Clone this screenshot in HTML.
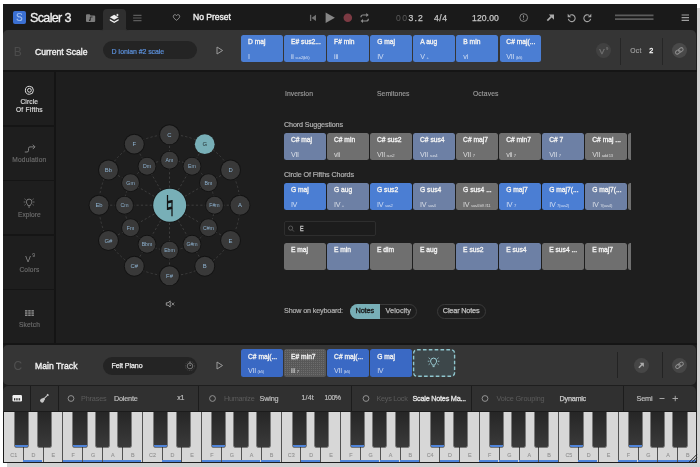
<!DOCTYPE html>
<html><head><meta charset="utf-8"><title>Scaler 3</title>
<style>
html,body{margin:0;padding:0;background:#fff;}
body{width:700px;height:467px;position:relative;overflow:hidden;font-family:"Liberation Sans",sans-serif;}
.r{position:absolute;}
.t{position:absolute;white-space:nowrap;}
#app{position:absolute;left:0;top:0;width:700px;height:467px;will-change:transform;}
svg text{font-family:"Liberation Sans",sans-serif;}
</style></head><body><div id="app">
<div class="r" style="left:7px;top:8px;width:693px;height:459px;background:#d2d2d2;"></div>
<div class="r" style="left:3px;top:4px;width:694px;height:459px;background:#1e1e1e;"></div>
<div class="r" style="left:3px;top:4px;width:694px;height:26.4px;background:#1a1a1a;"></div>
<div class="r" style="left:103.2px;top:8.6px;width:22.7px;height:22px;background:#2f2f2f;border-radius:4px 4px 0 0;"></div>
<div class="r" style="left:3.4px;top:30.4px;width:692.7px;height:40.1px;background:#353535;border-radius:5px 5px 0 0;"></div>
<div class="r" style="left:12.7px;top:11.2px;width:13px;height:13px;background:#3b70d3;border-radius:2px;"></div>
<div class="t" style="left:15.9px;top:12.1px;font-size:10px;line-height:12px;color:#a3c0f0;-webkit-text-stroke:0.1px #a3c0f0;">S</div>
<div class="t" style="left:30px;top:11.14px;font-size:12.6px;line-height:15.12px;color:#f0f0f0;-webkit-text-stroke:0.3px #f0f0f0;letter-spacing:-0.678px;">Scaler 3</div>
<div class="t" style="left:193px;top:12.24px;font-size:8.6px;line-height:10.32px;color:#f2f2f2;-webkit-text-stroke:0.35px #f2f2f2;letter-spacing:-0.026px;">No Preset</div>
<div class="t" style="left:396px;top:13.04px;font-size:8.6px;line-height:10.32px;color:#5a5a5a;letter-spacing:1.468px;">00</div>
<div class="t" style="left:408.5px;top:13.04px;font-size:8.6px;line-height:10.32px;color:#c6c6c6;-webkit-text-stroke:0.25px #c6c6c6;letter-spacing:1.182px;">3.2</div>
<div class="t" style="left:434px;top:13.04px;font-size:8.6px;line-height:10.32px;color:#c6c6c6;-webkit-text-stroke:0.25px #c6c6c6;letter-spacing:0.515px;">4/4</div>
<div class="t" style="left:472px;top:13.04px;font-size:8.6px;line-height:10.32px;color:#c6c6c6;-webkit-text-stroke:0.25px #c6c6c6;letter-spacing:0.116px;">120.00</div>
<svg class="r" style="left:0;top:0" width="700" height="60" viewBox="0 0 700 60">
<!-- tab feet -->
<path d="M100 30.5h3.3v-3.3a3.3 3.3 0 0 1-3.3 3.3zM129.2 30.5h-3.3v-3.3a3.3 3.3 0 0 0 3.3 3.3z" fill="#2f2f2f"/>
<!-- folder -->
<path d="M86 15.2a1 1 0 0 1 1-1h2.6l1 1.3h3.6a1 1 0 0 1 1 1v4.6a1 1 0 0 1-1 1h-7.2a1 1 0 0 1-1-1z" fill="#7c7c7c"/>
<path d="M90.3 20.2v-3.2h2.2" fill="none" stroke="#1a1a1a" stroke-width="0.8"/><circle cx="89.7" cy="20.2" r="0.8" fill="#1a1a1a"/>
<!-- layers (active) -->
<path d="M109.8 17.3l4.4-2.5 4.4 2.5-4.4 2.5z" fill="#f0f0f0"/>
<path d="M109.8 19.1l4.4 2.5 4.4-2.5v1.4l-4.4 2.5-4.4-2.5z" fill="#f0f0f0"/>
<circle cx="117.4" cy="15" r="1.3" fill="#f0f0f0" stroke="#2f2f2f" stroke-width="0.5"/>
<!-- list -->
<path d="M133.3 15.3h8.2M133 18h8.5M133.3 20.7h8.2" stroke="#5c5c5c" stroke-width="1.2"/>
<!-- heart -->
<path d="M176.5 20.3c-2-1.5-3.2-2.6-3.2-3.9a1.7 1.7 0 0 1 3.2-.8 1.7 1.7 0 0 1 3.2.8c0 1.3-1.2 2.4-3.2 3.9z" fill="none" stroke="#9a9a9a" stroke-width="0.9"/>
<!-- prev -->
<path d="M310.6 14.8v6.2" stroke="#727272" stroke-width="1.3"/>
<path d="M316 14.8v6.2l-4.5-3.1z" fill="#727272"/>
<!-- play -->
<path d="M325.6 12.4v10.6l9.3-5.3z" fill="#868686"/>
<!-- record -->
<circle cx="347.8" cy="17.7" r="4.3" fill="#7c3a43"/>
<!-- loop -->
<path d="M361 17.3v-.3a2 2 0 0 1 2-2h4.3M368.3 18.7v.3a2 2 0 0 1-2 2h-4.3" fill="none" stroke="#8c8c8c" stroke-width="1.2"/>
<path d="M366.3 13l2.4 2-2.4 2zM363 19l-2.4 2 2.4 2z" fill="#8c8c8c"/>
<!-- clock -->
<circle cx="523.7" cy="17.6" r="3.9" fill="none" stroke="#8c8c8c" stroke-width="0.9"/>
<path d="M523.5 15.3v2.4M523.5 18.7v1" stroke="#8c8c8c" stroke-width="1"/>
<!-- arrow NE -->
<path d="M547.3 20.6l4.2-4.2" stroke="#aaaaaa" stroke-width="1.7"/>
<path d="M548.8 14.6h5.2v5.2z" fill="#aaaaaa"/>
<!-- undo -->
<path d="M569.8 15.4a3.4 3.4 0 1 1-1.4 3.4" fill="none" stroke="#a4a4a4" stroke-width="1.1"/>
<path d="M567.7 13.8v3.5h3.5z" fill="#a4a4a4"/>
<!-- redo -->
<path d="M589.2 15.4a3.4 3.4 0 1 0 1.4 3.4" fill="none" stroke="#a4a4a4" stroke-width="1.1"/>
<path d="M591.3 13.8v3.5h-3.5z" fill="#a4a4a4"/>
<!-- double line -->
<path d="M615 15.4h38.5M615 19.1h38.5" stroke="#5c5c5c" stroke-width="1.6"/>
<!-- hamburger -->
<path d="M681.6 15h7.4M681.6 17.7h7.4M681.6 20.4h7.4" stroke="#a0a0a0" stroke-width="1.2"/>
<!-- scale row play -->
<path d="M217 47v7l5.6-3.5z" fill="none" stroke="#9a9a9a" stroke-width="1" stroke-linejoin="round"/>
</svg>
<div class="t" style="left:13.8px;top:44.5px;font-size:12px;line-height:14.4px;color:#4c4c4c;">B</div>
<div class="t" style="left:35px;top:46.64px;font-size:8.6px;line-height:10.32px;color:#f2f2f2;-webkit-text-stroke:0.35px #f2f2f2;letter-spacing:0.002px;">Current Scale</div>
<div class="r" style="left:103px;top:41px;width:94px;height:18px;background:#242424;border-radius:9px;"></div>
<div class="t" style="left:111.5px;top:47.8px;font-size:7px;line-height:8.4px;color:#5b8fd9;-webkit-text-stroke:0.2px #5b8fd9;letter-spacing:-0.093px;">D Ionian #2 scale</div>
<div class="r" style="left:241.2px;top:35.2px;width:41.6px;height:27.2px;background:#4b7ed3;border-radius:2.5px;"></div>
<div class="t" style="left:248px;top:38.18px;font-size:6.7px;line-height:8.04px;color:#f2f2f2;-webkit-text-stroke:0.33px #f2f2f2;">D maj</div>
<div class="t" style="left:248px;top:52.98px;font-size:7.2px;line-height:8.64px;color:rgba(255,255,255,.72);letter-spacing:-0.3px;">I</div>
<div class="r" style="left:284.25px;top:35.2px;width:41.6px;height:27.2px;background:#4b7ed3;border-radius:2.5px;"></div>
<div class="t" style="left:291.05px;top:38.18px;font-size:6.7px;line-height:8.04px;color:#f2f2f2;-webkit-text-stroke:0.33px #f2f2f2;">E# sus2...</div>
<div class="t" style="left:291.05px;top:52.98px;font-size:7.2px;line-height:8.64px;color:rgba(255,255,255,.72);letter-spacing:-0.3px;">ii <span style="font-size:4.2px">sus2(b5)</span></div>
<div class="r" style="left:327.3px;top:35.2px;width:41.6px;height:27.2px;background:#4b7ed3;border-radius:2.5px;"></div>
<div class="t" style="left:334.1px;top:38.18px;font-size:6.7px;line-height:8.04px;color:#f2f2f2;-webkit-text-stroke:0.33px #f2f2f2;">F# min</div>
<div class="t" style="left:334.1px;top:52.98px;font-size:7.2px;line-height:8.64px;color:rgba(255,255,255,.72);letter-spacing:-0.3px;">iii</div>
<div class="r" style="left:370.35px;top:35.2px;width:41.6px;height:27.2px;background:#4b7ed3;border-radius:2.5px;"></div>
<div class="t" style="left:377.15px;top:38.18px;font-size:6.7px;line-height:8.04px;color:#f2f2f2;-webkit-text-stroke:0.33px #f2f2f2;">G maj</div>
<div class="t" style="left:377.15px;top:52.98px;font-size:7.2px;line-height:8.64px;color:rgba(255,255,255,.72);letter-spacing:-0.3px;">IV</div>
<div class="r" style="left:413.4px;top:35.2px;width:41.6px;height:27.2px;background:#4b7ed3;border-radius:2.5px;"></div>
<div class="t" style="left:420.2px;top:38.18px;font-size:6.7px;line-height:8.04px;color:#f2f2f2;-webkit-text-stroke:0.33px #f2f2f2;">A aug</div>
<div class="t" style="left:420.2px;top:52.98px;font-size:7.2px;line-height:8.64px;color:rgba(255,255,255,.72);letter-spacing:-0.3px;">V <span style="font-size:4.2px">+</span></div>
<div class="r" style="left:456.45px;top:35.2px;width:41.6px;height:27.2px;background:#4b7ed3;border-radius:2.5px;"></div>
<div class="t" style="left:463.25px;top:38.18px;font-size:6.7px;line-height:8.04px;color:#f2f2f2;-webkit-text-stroke:0.33px #f2f2f2;">B min</div>
<div class="t" style="left:463.25px;top:52.98px;font-size:7.2px;line-height:8.64px;color:rgba(255,255,255,.72);letter-spacing:-0.3px;">vi</div>
<div class="r" style="left:499.5px;top:35.2px;width:41.6px;height:27.2px;background:#4b7ed3;border-radius:2.5px;"></div>
<div class="t" style="left:506.3px;top:38.18px;font-size:6.7px;line-height:8.04px;color:#f2f2f2;-webkit-text-stroke:0.33px #f2f2f2;">C# maj(...</div>
<div class="t" style="left:506.3px;top:52.98px;font-size:7.2px;line-height:8.64px;color:rgba(255,255,255,.72);letter-spacing:-0.3px;">VII <span style="font-size:4.2px">(b5)</span></div>
<div class="r" style="left:619.5px;top:38px;width:1px;height:27px;background:#262626;"></div>
<div class="r" style="left:662px;top:38px;width:1px;height:27px;background:#262626;"></div>
<div class="r" style="left:595.8px;top:42.9px;width:15.2px;height:15.2px;background:#414141;border-radius:50%;"></div>
<div class="t" style="left:599.2px;top:46.7px;font-size:8px;line-height:9.6px;color:#747474;-webkit-text-stroke:0.25px #747474;">V</div>
<div class="t" style="left:606px;top:45.98px;font-size:4.2px;line-height:5.04px;color:#747474;-webkit-text-stroke:0.1px #747474;">9</div>
<div class="t" style="left:630.3px;top:47.22px;font-size:6.8px;line-height:8.16px;color:#a0a0a0;-webkit-text-stroke:0.15px #a0a0a0;letter-spacing:0.207px;">Oct</div>
<div class="t" style="left:649.3px;top:46.98px;font-size:7.2px;line-height:8.64px;color:#f2f2f2;-webkit-text-stroke:0.35px #f2f2f2;">2</div>
<div class="r" style="left:672px;top:43.4px;width:14.8px;height:14.8px;background:#494949;border-radius:50%;"></div>
<div class="r" style="left:54.2px;top:71px;width:1.8px;height:274px;background:#141414;"></div>
<div class="r" style="left:3px;top:70.3px;width:694px;height:1.5px;background:#151515;"></div>
<div class="r" style="left:3px;top:125px;width:52px;height:1.5px;background:#151515;"></div>
<div class="r" style="left:3px;top:179.6px;width:52px;height:1.5px;background:#151515;"></div>
<div class="r" style="left:3px;top:234.2px;width:52px;height:1.5px;background:#151515;"></div>
<div class="r" style="left:3px;top:288.8px;width:52px;height:1.5px;background:#151515;"></div>
<div class="r" style="left:3px;top:343.4px;width:694px;height:1.5px;background:#151515;"></div>
<div class="t" style="left:20.5px;top:97.74px;font-size:6.6px;line-height:7.92px;color:#d8d8d8;-webkit-text-stroke:0.2px #d8d8d8;letter-spacing:0.105px;">Circle</div>
<div class="t" style="left:16px;top:105.74px;font-size:6.6px;line-height:7.92px;color:#d8d8d8;-webkit-text-stroke:0.2px #d8d8d8;letter-spacing:0.218px;">Of Fifths</div>
<div class="t" style="left:12.3px;top:156.34px;font-size:6.6px;line-height:7.92px;color:#6c6c6c;-webkit-text-stroke:0.15px #6c6c6c;letter-spacing:0.191px;">Modulation</div>
<div class="t" style="left:18px;top:211.14px;font-size:6.6px;line-height:7.92px;color:#6c6c6c;-webkit-text-stroke:0.15px #6c6c6c;letter-spacing:0.032px;">Explore</div>
<div class="t" style="left:19.4px;top:265.84px;font-size:6.6px;line-height:7.92px;color:#6c6c6c;-webkit-text-stroke:0.15px #6c6c6c;letter-spacing:0.172px;">Colors</div>
<div class="t" style="left:18.9px;top:320.54px;font-size:6.6px;line-height:7.92px;color:#6c6c6c;-webkit-text-stroke:0.15px #6c6c6c;letter-spacing:0.171px;">Sketch</div>
<div class="t" style="left:25.2px;top:254.06px;font-size:8.4px;line-height:10.08px;color:#8a8a8a;">V</div>
<div class="t" style="left:32.2px;top:251.98px;font-size:5.2px;line-height:6.24px;color:#8a8a8a;">9</div>
<div class="t" style="left:285px;top:89.82px;font-size:6.8px;line-height:8.16px;color:#9a9a9a;-webkit-text-stroke:0.15px #9a9a9a;letter-spacing:0.046px;">Inversion</div>
<div class="t" style="left:377px;top:89.82px;font-size:6.8px;line-height:8.16px;color:#9a9a9a;-webkit-text-stroke:0.15px #9a9a9a;letter-spacing:0.042px;">Semitones</div>
<div class="t" style="left:473px;top:89.82px;font-size:6.8px;line-height:8.16px;color:#9a9a9a;-webkit-text-stroke:0.15px #9a9a9a;letter-spacing:0.08px;">Octaves</div>
<div class="t" style="left:284px;top:120.68px;font-size:7.2px;line-height:8.64px;color:#b0b0b0;-webkit-text-stroke:0.2px #b0b0b0;letter-spacing:-0.131px;">Chord Suggestions</div>
<div class="t" style="left:284px;top:170.78px;font-size:7.2px;line-height:8.64px;color:#b0b0b0;-webkit-text-stroke:0.2px #b0b0b0;letter-spacing:-0.122px;">Circle Of Fifths Chords</div>
<div class="r" style="left:283.6px;top:130px;width:347.5px;height:145px;overflow:hidden">
<div class="r" style="left:0.5px;top:3.2px;width:41.6px;height:27.2px;background:#6d80a5;border-radius:2.5px;"></div>
<div class="t" style="left:7.3px;top:6.18px;font-size:6.7px;line-height:8.04px;color:#f2f2f2;-webkit-text-stroke:0.33px #f2f2f2;">C# maj</div>
<div class="t" style="left:7.3px;top:20.98px;font-size:7.2px;line-height:8.64px;color:rgba(255,255,255,.72);letter-spacing:-0.3px;">VII</div>
<div class="r" style="left:43.55px;top:3.2px;width:41.6px;height:27.2px;background:#6f6f6f;border-radius:2.5px;"></div>
<div class="t" style="left:50.35px;top:6.18px;font-size:6.7px;line-height:8.04px;color:#f2f2f2;-webkit-text-stroke:0.33px #f2f2f2;">C# min</div>
<div class="t" style="left:50.35px;top:20.98px;font-size:7.2px;line-height:8.64px;color:rgba(255,255,255,.72);letter-spacing:-0.3px;">vii</div>
<div class="r" style="left:86.6px;top:3.2px;width:41.6px;height:27.2px;background:#6f6f6f;border-radius:2.5px;"></div>
<div class="t" style="left:93.4px;top:6.18px;font-size:6.7px;line-height:8.04px;color:#f2f2f2;-webkit-text-stroke:0.33px #f2f2f2;">C# sus2</div>
<div class="t" style="left:93.4px;top:20.98px;font-size:7.2px;line-height:8.64px;color:rgba(255,255,255,.72);letter-spacing:-0.3px;">VII <span style="font-size:4.2px">sus2</span></div>
<div class="r" style="left:129.65px;top:3.2px;width:41.6px;height:27.2px;background:#6d80a5;border-radius:2.5px;"></div>
<div class="t" style="left:136.45px;top:6.18px;font-size:6.7px;line-height:8.04px;color:#f2f2f2;-webkit-text-stroke:0.33px #f2f2f2;">C# sus4</div>
<div class="t" style="left:136.45px;top:20.98px;font-size:7.2px;line-height:8.64px;color:rgba(255,255,255,.72);letter-spacing:-0.3px;">VII <span style="font-size:4.2px">sus4</span></div>
<div class="r" style="left:172.7px;top:3.2px;width:41.6px;height:27.2px;background:#6f6f6f;border-radius:2.5px;"></div>
<div class="t" style="left:179.5px;top:6.18px;font-size:6.7px;line-height:8.04px;color:#f2f2f2;-webkit-text-stroke:0.33px #f2f2f2;">C# maj7</div>
<div class="t" style="left:179.5px;top:20.98px;font-size:7.2px;line-height:8.64px;color:rgba(255,255,255,.72);letter-spacing:-0.3px;">VII <span style="font-size:4.2px">7</span></div>
<div class="r" style="left:215.75px;top:3.2px;width:41.6px;height:27.2px;background:#6f6f6f;border-radius:2.5px;"></div>
<div class="t" style="left:222.55px;top:6.18px;font-size:6.7px;line-height:8.04px;color:#f2f2f2;-webkit-text-stroke:0.33px #f2f2f2;">C# min7</div>
<div class="t" style="left:222.55px;top:20.98px;font-size:7.2px;line-height:8.64px;color:rgba(255,255,255,.72);letter-spacing:-0.3px;">vii <span style="font-size:4.2px">7</span></div>
<div class="r" style="left:258.8px;top:3.2px;width:41.6px;height:27.2px;background:#6d80a5;border-radius:2.5px;"></div>
<div class="t" style="left:265.6px;top:6.18px;font-size:6.7px;line-height:8.04px;color:#f2f2f2;-webkit-text-stroke:0.33px #f2f2f2;">C# 7</div>
<div class="t" style="left:265.6px;top:20.98px;font-size:7.2px;line-height:8.64px;color:rgba(255,255,255,.72);letter-spacing:-0.3px;">VII <span style="font-size:4.2px">7</span></div>
<div class="r" style="left:301.85px;top:3.2px;width:41.6px;height:27.2px;background:#6f6f6f;border-radius:2.5px;"></div>
<div class="t" style="left:308.65px;top:6.18px;font-size:6.7px;line-height:8.04px;color:#f2f2f2;-webkit-text-stroke:0.33px #f2f2f2;">C# maj ...</div>
<div class="t" style="left:308.65px;top:20.98px;font-size:7.2px;line-height:8.64px;color:rgba(255,255,255,.72);letter-spacing:-0.3px;">VII <span style="font-size:4.2px">add 13</span></div>
<div class="r" style="left:344.9px;top:3.2px;width:41.6px;height:27.2px;background:#6f6f6f;border-radius:2.5px;"></div>
<div class="r" style="left:0.5px;top:53px;width:41.6px;height:27.2px;background:#4b7ed3;border-radius:2.5px;"></div>
<div class="t" style="left:7.3px;top:55.98px;font-size:6.7px;line-height:8.04px;color:#f2f2f2;-webkit-text-stroke:0.33px #f2f2f2;">G maj</div>
<div class="t" style="left:7.3px;top:70.78px;font-size:7.2px;line-height:8.64px;color:rgba(255,255,255,.72);letter-spacing:-0.3px;">IV</div>
<div class="r" style="left:43.55px;top:53px;width:41.6px;height:27.2px;background:#6d80a5;border-radius:2.5px;"></div>
<div class="t" style="left:50.35px;top:55.98px;font-size:6.7px;line-height:8.04px;color:#f2f2f2;-webkit-text-stroke:0.33px #f2f2f2;">G aug</div>
<div class="t" style="left:50.35px;top:70.78px;font-size:7.2px;line-height:8.64px;color:rgba(255,255,255,.72);letter-spacing:-0.3px;">IV <span style="font-size:4.2px">+</span></div>
<div class="r" style="left:86.6px;top:53px;width:41.6px;height:27.2px;background:#4b7ed3;border-radius:2.5px;"></div>
<div class="t" style="left:93.4px;top:55.98px;font-size:6.7px;line-height:8.04px;color:#f2f2f2;-webkit-text-stroke:0.33px #f2f2f2;">G sus2</div>
<div class="t" style="left:93.4px;top:70.78px;font-size:7.2px;line-height:8.64px;color:rgba(255,255,255,.72);letter-spacing:-0.3px;">IV <span style="font-size:4.2px">sus2</span></div>
<div class="r" style="left:129.65px;top:53px;width:41.6px;height:27.2px;background:#6d80a5;border-radius:2.5px;"></div>
<div class="t" style="left:136.45px;top:55.98px;font-size:6.7px;line-height:8.04px;color:#f2f2f2;-webkit-text-stroke:0.33px #f2f2f2;">G sus4</div>
<div class="t" style="left:136.45px;top:70.78px;font-size:7.2px;line-height:8.64px;color:rgba(255,255,255,.72);letter-spacing:-0.3px;">IV <span style="font-size:4.2px">sus4</span></div>
<div class="r" style="left:172.7px;top:53px;width:41.6px;height:27.2px;background:#6f6f6f;border-radius:2.5px;"></div>
<div class="t" style="left:179.5px;top:55.98px;font-size:6.7px;line-height:8.04px;color:#f2f2f2;-webkit-text-stroke:0.33px #f2f2f2;">G sus4 ...</div>
<div class="t" style="left:179.5px;top:70.78px;font-size:7.2px;line-height:8.64px;color:rgba(255,255,255,.72);letter-spacing:-0.3px;">IV <span style="font-size:4.2px">sus4 b9 #11</span></div>
<div class="r" style="left:215.75px;top:53px;width:41.6px;height:27.2px;background:#4b7ed3;border-radius:2.5px;"></div>
<div class="t" style="left:222.55px;top:55.98px;font-size:6.7px;line-height:8.04px;color:#f2f2f2;-webkit-text-stroke:0.33px #f2f2f2;">G maj7</div>
<div class="t" style="left:222.55px;top:70.78px;font-size:7.2px;line-height:8.64px;color:rgba(255,255,255,.72);letter-spacing:-0.3px;">IV <span style="font-size:4.2px">7</span></div>
<div class="r" style="left:258.8px;top:53px;width:41.6px;height:27.2px;background:#4b7ed3;border-radius:2.5px;"></div>
<div class="t" style="left:265.6px;top:55.98px;font-size:6.7px;line-height:8.04px;color:#f2f2f2;-webkit-text-stroke:0.33px #f2f2f2;">G maj7(...</div>
<div class="t" style="left:265.6px;top:70.78px;font-size:7.2px;line-height:8.64px;color:rgba(255,255,255,.72);letter-spacing:-0.3px;">IV <span style="font-size:4.2px">7(sus2)</span></div>
<div class="r" style="left:301.85px;top:53px;width:41.6px;height:27.2px;background:#6d80a5;border-radius:2.5px;"></div>
<div class="t" style="left:308.65px;top:55.98px;font-size:6.7px;line-height:8.04px;color:#f2f2f2;-webkit-text-stroke:0.33px #f2f2f2;">G maj7(...</div>
<div class="t" style="left:308.65px;top:70.78px;font-size:7.2px;line-height:8.64px;color:rgba(255,255,255,.72);letter-spacing:-0.3px;">IV <span style="font-size:4.2px">7(sus4)</span></div>
<div class="r" style="left:344.9px;top:53px;width:41.6px;height:27.2px;background:#6f6f6f;border-radius:2.5px;"></div>
<div class="r" style="left:0.5px;top:113.2px;width:41.6px;height:27.2px;background:#6f6f6f;border-radius:2.5px;"></div>
<div class="t" style="left:7.3px;top:116.18px;font-size:6.7px;line-height:8.04px;color:#f2f2f2;-webkit-text-stroke:0.33px #f2f2f2;">E maj</div>
<div class="r" style="left:43.55px;top:113.2px;width:41.6px;height:27.2px;background:#6d80a5;border-radius:2.5px;"></div>
<div class="t" style="left:50.35px;top:116.18px;font-size:6.7px;line-height:8.04px;color:#f2f2f2;-webkit-text-stroke:0.33px #f2f2f2;">E min</div>
<div class="r" style="left:86.6px;top:113.2px;width:41.6px;height:27.2px;background:#6f6f6f;border-radius:2.5px;"></div>
<div class="t" style="left:93.4px;top:116.18px;font-size:6.7px;line-height:8.04px;color:#f2f2f2;-webkit-text-stroke:0.33px #f2f2f2;">E dim</div>
<div class="r" style="left:129.65px;top:113.2px;width:41.6px;height:27.2px;background:#6f6f6f;border-radius:2.5px;"></div>
<div class="t" style="left:136.45px;top:116.18px;font-size:6.7px;line-height:8.04px;color:#f2f2f2;-webkit-text-stroke:0.33px #f2f2f2;">E aug</div>
<div class="r" style="left:172.7px;top:113.2px;width:41.6px;height:27.2px;background:#6d80a5;border-radius:2.5px;"></div>
<div class="t" style="left:179.5px;top:116.18px;font-size:6.7px;line-height:8.04px;color:#f2f2f2;-webkit-text-stroke:0.33px #f2f2f2;">E sus2</div>
<div class="r" style="left:215.75px;top:113.2px;width:41.6px;height:27.2px;background:#6d80a5;border-radius:2.5px;"></div>
<div class="t" style="left:222.55px;top:116.18px;font-size:6.7px;line-height:8.04px;color:#f2f2f2;-webkit-text-stroke:0.33px #f2f2f2;">E sus4</div>
<div class="r" style="left:258.8px;top:113.2px;width:41.6px;height:27.2px;background:#6f6f6f;border-radius:2.5px;"></div>
<div class="t" style="left:265.6px;top:116.18px;font-size:6.7px;line-height:8.04px;color:#f2f2f2;-webkit-text-stroke:0.33px #f2f2f2;">E sus4 ...</div>
<div class="r" style="left:301.85px;top:113.2px;width:41.6px;height:27.2px;background:#6f6f6f;border-radius:2.5px;"></div>
<div class="t" style="left:308.65px;top:116.18px;font-size:6.7px;line-height:8.04px;color:#f2f2f2;-webkit-text-stroke:0.33px #f2f2f2;">E maj7</div>
<div class="r" style="left:344.9px;top:113.2px;width:41.6px;height:27.2px;background:#6f6f6f;border-radius:2.5px;"></div>
</div>
<div class="r" style="left:284px;top:221px;width:91.5px;height:15px;background:#1c1c1c;border:1px solid #2e2e2e;border-radius:2px;box-sizing:border-box;"></div>
<div class="t" style="left:299.7px;top:225.12px;font-size:6.3px;line-height:7.56px;color:#c4c4c4;-webkit-text-stroke:0.35px #c4c4c4;transform:scaleX(.85);transform-origin:0 50%;">E</div>
<div class="t" style="left:284px;top:306.98px;font-size:7.2px;line-height:8.64px;color:#b0b0b0;-webkit-text-stroke:0.2px #b0b0b0;letter-spacing:-0.155px;">Show on keyboard:</div>
<div class="r" style="left:349.7px;top:303.5px;width:67.5px;height:15px;background:transparent;border:1px solid #3a3a3a;border-radius:8px;box-sizing:border-box;"></div>
<div class="r" style="left:349.7px;top:303.5px;width:30.5px;height:15px;background:#78afb7;border-radius:8px 0 0 8px;"></div>
<div class="t" style="left:355.5px;top:306.96px;font-size:7.4px;line-height:8.88px;color:#1a1a1a;-webkit-text-stroke:0.3px #1a1a1a;letter-spacing:-0.166px;">Notes</div>
<div class="t" style="left:385.5px;top:306.96px;font-size:7.4px;line-height:8.88px;color:#b6b6b6;-webkit-text-stroke:0.25px #b6b6b6;letter-spacing:-0px;">Velocity</div>
<div class="r" style="left:436.5px;top:303.5px;width:49.5px;height:15px;background:transparent;border:1px solid #3a3a3a;border-radius:8px;box-sizing:border-box;"></div>
<div class="t" style="left:442.8px;top:306.96px;font-size:7.4px;line-height:8.88px;color:#c0c0c0;-webkit-text-stroke:0.25px #c0c0c0;letter-spacing:-0.215px;">Clear Notes</div>
<div class="r" style="left:3.4px;top:344.6px;width:692.3px;height:40px;background:#353535;border-radius:5px;"></div>
<div class="t" style="left:13.6px;top:359.3px;font-size:12px;line-height:14.4px;color:#505050;">C</div>
<div class="t" style="left:35px;top:361.34px;font-size:8.6px;line-height:10.32px;color:#f2f2f2;-webkit-text-stroke:0.35px #f2f2f2;letter-spacing:0.045px;">Main Track</div>
<div class="r" style="left:103px;top:357px;width:94px;height:18px;background:#242424;border-radius:9px;"></div>
<div class="t" style="left:111.5px;top:362.1px;font-size:7px;line-height:8.4px;color:#ececec;-webkit-text-stroke:0.25px #ececec;letter-spacing:-0.052px;">Felt Piano</div>
<div class="r" style="left:241.2px;top:349.4px;width:41.6px;height:27.2px;background:#3a69c4;border-radius:2.5px;"></div>
<div class="t" style="left:248px;top:352.98px;font-size:6.7px;line-height:8.04px;color:#f2f2f2;-webkit-text-stroke:0.33px #f2f2f2;">C# maj(...</div>
<div class="t" style="left:248px;top:367.18px;font-size:7.2px;line-height:8.64px;color:rgba(255,255,255,.72);letter-spacing:-0.3px;">VII <span style="font-size:4.2px">(b5)</span></div>
<div class="r" style="left:284.25px;top:349.4px;width:41.6px;height:27.2px;background:#585858;border-radius:2.5px;"></div>
<svg class="r" style="left:285px;top:350px" width="40" height="26" viewBox="0 0 40 26"><defs><pattern id="dots" width="2" height="2" patternUnits="userSpaceOnUse"><rect width="1" height="1" fill="#6c6c6c"/></pattern></defs><rect width="40" height="26" fill="url(#dots)"/></svg>
<div class="r" style="left:284.25px;top:349.4px;width:41.6px;height:27.2px;background:transparent;border-radius:2.5px;"></div>
<div class="t" style="left:291.05px;top:352.98px;font-size:6.7px;line-height:8.04px;color:#f2f2f2;-webkit-text-stroke:0.33px #f2f2f2;">E# min7</div>
<div class="t" style="left:291.05px;top:367.18px;font-size:7.2px;line-height:8.64px;color:rgba(255,255,255,.72);letter-spacing:-0.3px;">iii <span style="font-size:4.2px">7</span></div>
<div class="r" style="left:327.3px;top:349.4px;width:41.6px;height:27.2px;background:#3a69c4;border-radius:2.5px;"></div>
<div class="t" style="left:334.1px;top:352.98px;font-size:6.7px;line-height:8.04px;color:#f2f2f2;-webkit-text-stroke:0.33px #f2f2f2;">C# maj(...</div>
<div class="t" style="left:334.1px;top:367.18px;font-size:7.2px;line-height:8.64px;color:rgba(255,255,255,.72);letter-spacing:-0.3px;">VII <span style="font-size:4.2px">(b5)</span></div>
<div class="r" style="left:370.35px;top:349.4px;width:41.6px;height:27.2px;background:#3a69c4;border-radius:2.5px;"></div>
<div class="t" style="left:377.15px;top:352.98px;font-size:6.7px;line-height:8.04px;color:#f2f2f2;-webkit-text-stroke:0.33px #f2f2f2;">G maj</div>
<div class="t" style="left:377.15px;top:367.18px;font-size:7.2px;line-height:8.64px;color:rgba(255,255,255,.72);letter-spacing:-0.3px;">IV</div>
<div class="r" style="left:413.4px;top:349.4px;width:41.6px;height:27.2px;background:#3d474a;border-radius:4px;"></div>
<div class="r" style="left:617px;top:352px;width:1px;height:26px;background:#232323;"></div>
<div class="r" style="left:662px;top:352px;width:1px;height:26px;background:#232323;"></div>
<div class="r" style="left:633.8px;top:357.7px;width:15px;height:15px;background:#464646;border-radius:50%;"></div>
<div class="r" style="left:672.2px;top:357.7px;width:15px;height:15px;background:#464646;border-radius:50%;"></div>
<div class="r" style="left:3.4px;top:386px;width:692.3px;height:25.5px;background:#303030;border-radius:5px 5px 0 0;"></div>
<div class="r" style="left:30px;top:386px;width:1px;height:25px;background:#1c1c1c;"></div>
<div class="r" style="left:58.3px;top:386px;width:1px;height:25px;background:#1c1c1c;"></div>
<div class="r" style="left:198.2px;top:386px;width:1px;height:25px;background:#1c1c1c;"></div>
<div class="r" style="left:351.3px;top:386px;width:1px;height:25px;background:#1c1c1c;"></div>
<div class="r" style="left:470.8px;top:386px;width:1px;height:25px;background:#1c1c1c;"></div>
<div class="r" style="left:622.7px;top:386px;width:1px;height:25px;background:#1c1c1c;"></div>
<div class="t" style="left:81px;top:394.62px;font-size:7.3px;line-height:8.76px;color:#5c5c5c;letter-spacing:-0.183px;">Phrases</div>
<div class="t" style="left:114px;top:394.62px;font-size:7.3px;line-height:8.76px;color:#bdbdbd;-webkit-text-stroke:0.2px #bdbdbd;letter-spacing:-0.237px;">Dolente</div>
<div class="t" style="left:177.2px;top:394.1px;font-size:7px;line-height:8.4px;color:#bdbdbd;-webkit-text-stroke:0.2px #bdbdbd;letter-spacing:-0.296px;">x1</div>
<div class="t" style="left:224px;top:394.62px;font-size:7.3px;line-height:8.76px;color:#5c5c5c;letter-spacing:-0.295px;">Humanize</div>
<div class="t" style="left:259.5px;top:394.62px;font-size:7.3px;line-height:8.76px;color:#bdbdbd;-webkit-text-stroke:0.2px #bdbdbd;letter-spacing:-0.176px;">Swing</div>
<div class="t" style="left:301.5px;top:394.3px;font-size:7px;line-height:8.4px;color:#bdbdbd;-webkit-text-stroke:0.2px #bdbdbd;letter-spacing:0.206px;">1/4t</div>
<div class="t" style="left:324.5px;top:394.3px;font-size:7px;line-height:8.4px;color:#bdbdbd;-webkit-text-stroke:0.2px #bdbdbd;letter-spacing:-0.451px;">100%</div>
<div class="t" style="left:376.5px;top:394.62px;font-size:7.3px;line-height:8.76px;color:#5c5c5c;letter-spacing:-0.297px;">Keys Lock</div>
<div class="t" style="left:412.5px;top:394.62px;font-size:7.3px;line-height:8.76px;color:#e4e4e4;-webkit-text-stroke:0.3px #e4e4e4;letter-spacing:-0.254px;">Scale Notes Ma...</div>
<div class="t" style="left:496.5px;top:394.62px;font-size:7.3px;line-height:8.76px;color:#5c5c5c;letter-spacing:-0.137px;">Voice Grouping</div>
<div class="t" style="left:559.5px;top:394.62px;font-size:7.3px;line-height:8.76px;color:#cccccc;-webkit-text-stroke:0.25px #cccccc;letter-spacing:-0.271px;">Dynamic</div>
<div class="t" style="left:636.5px;top:394.62px;font-size:7.3px;line-height:8.76px;color:#bdbdbd;-webkit-text-stroke:0.2px #bdbdbd;letter-spacing:-0.158px;">Semi</div>
<div class="r" style="left:3px;top:411.2px;width:694px;height:51.3px;background:#1a1a1a;"></div>
<div class="r" style="left:4px;top:412.2px;width:693px;height:50px;background:#d7d7d7;"></div>
<div class="t" style="left:10.26px;top:452.26px;font-size:5.4px;line-height:6.48px;color:#929292;-webkit-text-stroke:0.1px #929292;">C1</div>
<div class="r" style="left:23px;top:412.2px;width:1px;height:50.3px;background:#525252;"></div>
<div class="r" style="left:23.23px;top:459.7px;width:19.03px;height:2.5px;background:#4f84da;"></div>
<div class="t" style="left:31.59px;top:452.26px;font-size:5.4px;line-height:6.48px;color:#929292;-webkit-text-stroke:0.1px #929292;">D</div>
<div class="r" style="left:43px;top:412.2px;width:1px;height:50.3px;background:#525252;"></div>
<div class="t" style="left:51.57px;top:452.26px;font-size:5.4px;line-height:6.48px;color:#929292;-webkit-text-stroke:0.1px #929292;">E</div>
<div class="r" style="left:62px;top:412.2px;width:1px;height:50.3px;background:#525252;"></div>
<div class="r" style="left:62.89px;top:459.7px;width:19.03px;height:2.5px;background:#4f84da;"></div>
<div class="t" style="left:71.55px;top:452.26px;font-size:5.4px;line-height:6.48px;color:#929292;-webkit-text-stroke:0.1px #929292;">F</div>
<div class="r" style="left:82px;top:412.2px;width:1px;height:50.3px;background:#525252;"></div>
<div class="r" style="left:82.71px;top:459.7px;width:19.03px;height:2.5px;background:#4f84da;"></div>
<div class="t" style="left:90.93px;top:452.26px;font-size:5.4px;line-height:6.48px;color:#929292;-webkit-text-stroke:0.1px #929292;">G</div>
<div class="r" style="left:102px;top:412.2px;width:1px;height:50.3px;background:#525252;"></div>
<div class="r" style="left:102.54px;top:459.7px;width:19.03px;height:2.5px;background:#4f84da;"></div>
<div class="t" style="left:111.06px;top:452.26px;font-size:5.4px;line-height:6.48px;color:#929292;-webkit-text-stroke:0.1px #929292;">A</div>
<div class="r" style="left:122px;top:412.2px;width:1px;height:50.3px;background:#525252;"></div>
<div class="r" style="left:122.37px;top:459.7px;width:19.03px;height:2.5px;background:#4f84da;"></div>
<div class="t" style="left:130.88px;top:452.26px;font-size:5.4px;line-height:6.48px;color:#929292;-webkit-text-stroke:0.1px #929292;">B</div>
<div class="r" style="left:142px;top:412.2px;width:1px;height:50.3px;background:#525252;"></div>
<div class="t" style="left:149.06px;top:452.26px;font-size:5.4px;line-height:6.48px;color:#929292;-webkit-text-stroke:0.1px #929292;">C2</div>
<div class="r" style="left:162px;top:412.2px;width:1px;height:50.3px;background:#525252;"></div>
<div class="r" style="left:162.03px;top:459.7px;width:19.03px;height:2.5px;background:#4f84da;"></div>
<div class="t" style="left:170.39px;top:452.26px;font-size:5.4px;line-height:6.48px;color:#929292;-webkit-text-stroke:0.1px #929292;">D</div>
<div class="r" style="left:181px;top:412.2px;width:1px;height:50.3px;background:#525252;"></div>
<div class="t" style="left:190.37px;top:452.26px;font-size:5.4px;line-height:6.48px;color:#929292;-webkit-text-stroke:0.1px #929292;">E</div>
<div class="r" style="left:201px;top:412.2px;width:1px;height:50.3px;background:#525252;"></div>
<div class="r" style="left:201.69px;top:459.7px;width:19.03px;height:2.5px;background:#4f84da;"></div>
<div class="t" style="left:210.35px;top:452.26px;font-size:5.4px;line-height:6.48px;color:#929292;-webkit-text-stroke:0.1px #929292;">F</div>
<div class="r" style="left:221px;top:412.2px;width:1px;height:50.3px;background:#525252;"></div>
<div class="r" style="left:221.51px;top:459.7px;width:19.03px;height:2.5px;background:#4f84da;"></div>
<div class="t" style="left:229.73px;top:452.26px;font-size:5.4px;line-height:6.48px;color:#929292;-webkit-text-stroke:0.1px #929292;">G</div>
<div class="r" style="left:241px;top:412.2px;width:1px;height:50.3px;background:#525252;"></div>
<div class="r" style="left:241.34px;top:459.7px;width:19.03px;height:2.5px;background:#4f84da;"></div>
<div class="t" style="left:249.86px;top:452.26px;font-size:5.4px;line-height:6.48px;color:#929292;-webkit-text-stroke:0.1px #929292;">A</div>
<div class="r" style="left:261px;top:412.2px;width:1px;height:50.3px;background:#525252;"></div>
<div class="r" style="left:261.17px;top:459.7px;width:19.03px;height:2.5px;background:#4f84da;"></div>
<div class="t" style="left:269.68px;top:452.26px;font-size:5.4px;line-height:6.48px;color:#929292;-webkit-text-stroke:0.1px #929292;">B</div>
<div class="r" style="left:281px;top:412.2px;width:1px;height:50.3px;background:#525252;"></div>
<div class="t" style="left:287.86px;top:452.26px;font-size:5.4px;line-height:6.48px;color:#929292;-webkit-text-stroke:0.1px #929292;">C3</div>
<div class="r" style="left:300px;top:412.2px;width:1px;height:50.3px;background:#525252;"></div>
<div class="r" style="left:300.83px;top:459.7px;width:19.03px;height:2.5px;background:#4f84da;"></div>
<div class="t" style="left:309.19px;top:452.26px;font-size:5.4px;line-height:6.48px;color:#929292;-webkit-text-stroke:0.1px #929292;">D</div>
<div class="r" style="left:320px;top:412.2px;width:1px;height:50.3px;background:#525252;"></div>
<div class="t" style="left:329.17px;top:452.26px;font-size:5.4px;line-height:6.48px;color:#929292;-webkit-text-stroke:0.1px #929292;">E</div>
<div class="r" style="left:340px;top:412.2px;width:1px;height:50.3px;background:#525252;"></div>
<div class="r" style="left:340.49px;top:459.7px;width:19.03px;height:2.5px;background:#4f84da;"></div>
<div class="t" style="left:349.15px;top:452.26px;font-size:5.4px;line-height:6.48px;color:#929292;-webkit-text-stroke:0.1px #929292;">F</div>
<div class="r" style="left:360px;top:412.2px;width:1px;height:50.3px;background:#525252;"></div>
<div class="r" style="left:360.31px;top:459.7px;width:19.03px;height:2.5px;background:#4f84da;"></div>
<div class="t" style="left:368.53px;top:452.26px;font-size:5.4px;line-height:6.48px;color:#929292;-webkit-text-stroke:0.1px #929292;">G</div>
<div class="r" style="left:380px;top:412.2px;width:1px;height:50.3px;background:#525252;"></div>
<div class="r" style="left:380.14px;top:459.7px;width:19.03px;height:2.5px;background:#4f84da;"></div>
<div class="t" style="left:388.66px;top:452.26px;font-size:5.4px;line-height:6.48px;color:#929292;-webkit-text-stroke:0.1px #929292;">A</div>
<div class="r" style="left:400px;top:412.2px;width:1px;height:50.3px;background:#525252;"></div>
<div class="r" style="left:399.97px;top:459.7px;width:19.03px;height:2.5px;background:#4f84da;"></div>
<div class="t" style="left:408.48px;top:452.26px;font-size:5.4px;line-height:6.48px;color:#929292;-webkit-text-stroke:0.1px #929292;">B</div>
<div class="r" style="left:419px;top:412.2px;width:1px;height:50.3px;background:#525252;"></div>
<div class="t" style="left:426.66px;top:452.26px;font-size:5.4px;line-height:6.48px;color:#929292;-webkit-text-stroke:0.1px #929292;">C4</div>
<div class="r" style="left:439px;top:412.2px;width:1px;height:50.3px;background:#525252;"></div>
<div class="r" style="left:439.63px;top:459.7px;width:19.03px;height:2.5px;background:#4f84da;"></div>
<div class="t" style="left:447.99px;top:452.26px;font-size:5.4px;line-height:6.48px;color:#929292;-webkit-text-stroke:0.1px #929292;">D</div>
<div class="r" style="left:459px;top:412.2px;width:1px;height:50.3px;background:#525252;"></div>
<div class="t" style="left:467.97px;top:452.26px;font-size:5.4px;line-height:6.48px;color:#929292;-webkit-text-stroke:0.1px #929292;">E</div>
<div class="r" style="left:479px;top:412.2px;width:1px;height:50.3px;background:#525252;"></div>
<div class="r" style="left:479.29px;top:459.7px;width:19.03px;height:2.5px;background:#4f84da;"></div>
<div class="t" style="left:487.95px;top:452.26px;font-size:5.4px;line-height:6.48px;color:#929292;-webkit-text-stroke:0.1px #929292;">F</div>
<div class="r" style="left:499px;top:412.2px;width:1px;height:50.3px;background:#525252;"></div>
<div class="r" style="left:499.11px;top:459.7px;width:19.03px;height:2.5px;background:#4f84da;"></div>
<div class="t" style="left:507.33px;top:452.26px;font-size:5.4px;line-height:6.48px;color:#929292;-webkit-text-stroke:0.1px #929292;">G</div>
<div class="r" style="left:519px;top:412.2px;width:1px;height:50.3px;background:#525252;"></div>
<div class="r" style="left:518.94px;top:459.7px;width:19.03px;height:2.5px;background:#4f84da;"></div>
<div class="t" style="left:527.46px;top:452.26px;font-size:5.4px;line-height:6.48px;color:#929292;-webkit-text-stroke:0.1px #929292;">A</div>
<div class="r" style="left:538px;top:412.2px;width:1px;height:50.3px;background:#525252;"></div>
<div class="r" style="left:538.77px;top:459.7px;width:19.03px;height:2.5px;background:#4f84da;"></div>
<div class="t" style="left:547.28px;top:452.26px;font-size:5.4px;line-height:6.48px;color:#929292;-webkit-text-stroke:0.1px #929292;">B</div>
<div class="r" style="left:558px;top:412.2px;width:1px;height:50.3px;background:#525252;"></div>
<div class="t" style="left:565.46px;top:452.26px;font-size:5.4px;line-height:6.48px;color:#929292;-webkit-text-stroke:0.1px #929292;">C5</div>
<div class="r" style="left:578px;top:412.2px;width:1px;height:50.3px;background:#525252;"></div>
<div class="r" style="left:578.43px;top:459.7px;width:19.03px;height:2.5px;background:#4f84da;"></div>
<div class="t" style="left:586.79px;top:452.26px;font-size:5.4px;line-height:6.48px;color:#929292;-webkit-text-stroke:0.1px #929292;">D</div>
<div class="r" style="left:598px;top:412.2px;width:1px;height:50.3px;background:#525252;"></div>
<div class="t" style="left:606.77px;top:452.26px;font-size:5.4px;line-height:6.48px;color:#929292;-webkit-text-stroke:0.1px #929292;">E</div>
<div class="r" style="left:618px;top:412.2px;width:1px;height:50.3px;background:#525252;"></div>
<div class="r" style="left:618.09px;top:459.7px;width:19.03px;height:2.5px;background:#4f84da;"></div>
<div class="t" style="left:626.75px;top:452.26px;font-size:5.4px;line-height:6.48px;color:#929292;-webkit-text-stroke:0.1px #929292;">F</div>
<div class="r" style="left:638px;top:412.2px;width:1px;height:50.3px;background:#525252;"></div>
<div class="r" style="left:637.91px;top:459.7px;width:19.03px;height:2.5px;background:#4f84da;"></div>
<div class="t" style="left:646.13px;top:452.26px;font-size:5.4px;line-height:6.48px;color:#929292;-webkit-text-stroke:0.1px #929292;">G</div>
<div class="r" style="left:657px;top:412.2px;width:1px;height:50.3px;background:#525252;"></div>
<div class="r" style="left:657.74px;top:459.7px;width:19.03px;height:2.5px;background:#4f84da;"></div>
<div class="t" style="left:666.26px;top:452.26px;font-size:5.4px;line-height:6.48px;color:#929292;-webkit-text-stroke:0.1px #929292;">A</div>
<div class="r" style="left:677px;top:412.2px;width:1px;height:50.3px;background:#525252;"></div>
<div class="r" style="left:677.57px;top:459.7px;width:19.03px;height:2.5px;background:#4f84da;"></div>
<div class="t" style="left:686.08px;top:452.26px;font-size:5.4px;line-height:6.48px;color:#929292;-webkit-text-stroke:0.1px #929292;">B</div>
<div class="r" style="left:14.98px;top:412.2px;width:13.1px;height:35.2px;background:linear-gradient(#262626,#3a3a3a);border-radius:0 0 1px 1px;box-shadow:0 0 0 0.5px #1c1c1c;"></div>
<div class="r" style="left:14.98px;top:444.7px;width:13.1px;height:2.7px;background:#4f84da;border-radius:0 0 1.5px 1.5px;"></div>
<div class="r" style="left:37.71px;top:412.2px;width:13.1px;height:35.2px;background:linear-gradient(#262626,#3a3a3a);border-radius:0 0 1px 1px;box-shadow:0 0 0 0.5px #1c1c1c;"></div>
<div class="r" style="left:73.46px;top:412.2px;width:13.1px;height:35.2px;background:linear-gradient(#262626,#3a3a3a);border-radius:0 0 1px 1px;box-shadow:0 0 0 0.5px #1c1c1c;"></div>
<div class="r" style="left:73.46px;top:444.7px;width:13.1px;height:2.7px;background:#4f84da;border-radius:0 0 1.5px 1.5px;"></div>
<div class="r" style="left:95.69px;top:412.2px;width:13.1px;height:35.2px;background:linear-gradient(#262626,#3a3a3a);border-radius:0 0 1px 1px;box-shadow:0 0 0 0.5px #1c1c1c;"></div>
<div class="r" style="left:118.22px;top:412.2px;width:13.1px;height:35.2px;background:linear-gradient(#262626,#3a3a3a);border-radius:0 0 1px 1px;box-shadow:0 0 0 0.5px #1c1c1c;"></div>
<div class="r" style="left:153.78px;top:412.2px;width:13.1px;height:35.2px;background:linear-gradient(#262626,#3a3a3a);border-radius:0 0 1px 1px;box-shadow:0 0 0 0.5px #1c1c1c;"></div>
<div class="r" style="left:153.78px;top:444.7px;width:13.1px;height:2.7px;background:#4f84da;border-radius:0 0 1.5px 1.5px;"></div>
<div class="r" style="left:176.51px;top:412.2px;width:13.1px;height:35.2px;background:linear-gradient(#262626,#3a3a3a);border-radius:0 0 1px 1px;box-shadow:0 0 0 0.5px #1c1c1c;"></div>
<div class="r" style="left:212.26px;top:412.2px;width:13.1px;height:35.2px;background:linear-gradient(#262626,#3a3a3a);border-radius:0 0 1px 1px;box-shadow:0 0 0 0.5px #1c1c1c;"></div>
<div class="r" style="left:212.26px;top:444.7px;width:13.1px;height:2.7px;background:#4f84da;border-radius:0 0 1.5px 1.5px;"></div>
<div class="r" style="left:234.49px;top:412.2px;width:13.1px;height:35.2px;background:linear-gradient(#262626,#3a3a3a);border-radius:0 0 1px 1px;box-shadow:0 0 0 0.5px #1c1c1c;"></div>
<div class="r" style="left:257.02px;top:412.2px;width:13.1px;height:35.2px;background:linear-gradient(#262626,#3a3a3a);border-radius:0 0 1px 1px;box-shadow:0 0 0 0.5px #1c1c1c;"></div>
<div class="r" style="left:292.58px;top:412.2px;width:13.1px;height:35.2px;background:linear-gradient(#262626,#3a3a3a);border-radius:0 0 1px 1px;box-shadow:0 0 0 0.5px #1c1c1c;"></div>
<div class="r" style="left:292.58px;top:444.7px;width:13.1px;height:2.7px;background:#4f84da;border-radius:0 0 1.5px 1.5px;"></div>
<div class="r" style="left:315.31px;top:412.2px;width:13.1px;height:35.2px;background:linear-gradient(#262626,#3a3a3a);border-radius:0 0 1px 1px;box-shadow:0 0 0 0.5px #1c1c1c;"></div>
<div class="r" style="left:351.06px;top:412.2px;width:13.1px;height:35.2px;background:linear-gradient(#262626,#3a3a3a);border-radius:0 0 1px 1px;box-shadow:0 0 0 0.5px #1c1c1c;"></div>
<div class="r" style="left:351.06px;top:444.7px;width:13.1px;height:2.7px;background:#4f84da;border-radius:0 0 1.5px 1.5px;"></div>
<div class="r" style="left:373.29px;top:412.2px;width:13.1px;height:35.2px;background:linear-gradient(#262626,#3a3a3a);border-radius:0 0 1px 1px;box-shadow:0 0 0 0.5px #1c1c1c;"></div>
<div class="r" style="left:395.82px;top:412.2px;width:13.1px;height:35.2px;background:linear-gradient(#262626,#3a3a3a);border-radius:0 0 1px 1px;box-shadow:0 0 0 0.5px #1c1c1c;"></div>
<div class="r" style="left:431.38px;top:412.2px;width:13.1px;height:35.2px;background:linear-gradient(#262626,#3a3a3a);border-radius:0 0 1px 1px;box-shadow:0 0 0 0.5px #1c1c1c;"></div>
<div class="r" style="left:431.38px;top:444.7px;width:13.1px;height:2.7px;background:#4f84da;border-radius:0 0 1.5px 1.5px;"></div>
<div class="r" style="left:454.11px;top:412.2px;width:13.1px;height:35.2px;background:linear-gradient(#262626,#3a3a3a);border-radius:0 0 1px 1px;box-shadow:0 0 0 0.5px #1c1c1c;"></div>
<div class="r" style="left:489.86px;top:412.2px;width:13.1px;height:35.2px;background:linear-gradient(#262626,#3a3a3a);border-radius:0 0 1px 1px;box-shadow:0 0 0 0.5px #1c1c1c;"></div>
<div class="r" style="left:489.86px;top:444.7px;width:13.1px;height:2.7px;background:#4f84da;border-radius:0 0 1.5px 1.5px;"></div>
<div class="r" style="left:512.09px;top:412.2px;width:13.1px;height:35.2px;background:linear-gradient(#262626,#3a3a3a);border-radius:0 0 1px 1px;box-shadow:0 0 0 0.5px #1c1c1c;"></div>
<div class="r" style="left:534.62px;top:412.2px;width:13.1px;height:35.2px;background:linear-gradient(#262626,#3a3a3a);border-radius:0 0 1px 1px;box-shadow:0 0 0 0.5px #1c1c1c;"></div>
<div class="r" style="left:570.18px;top:412.2px;width:13.1px;height:35.2px;background:linear-gradient(#262626,#3a3a3a);border-radius:0 0 1px 1px;box-shadow:0 0 0 0.5px #1c1c1c;"></div>
<div class="r" style="left:570.18px;top:444.7px;width:13.1px;height:2.7px;background:#4f84da;border-radius:0 0 1.5px 1.5px;"></div>
<div class="r" style="left:592.91px;top:412.2px;width:13.1px;height:35.2px;background:linear-gradient(#262626,#3a3a3a);border-radius:0 0 1px 1px;box-shadow:0 0 0 0.5px #1c1c1c;"></div>
<div class="r" style="left:628.66px;top:412.2px;width:13.1px;height:35.2px;background:linear-gradient(#262626,#3a3a3a);border-radius:0 0 1px 1px;box-shadow:0 0 0 0.5px #1c1c1c;"></div>
<div class="r" style="left:628.66px;top:444.7px;width:13.1px;height:2.7px;background:#4f84da;border-radius:0 0 1.5px 1.5px;"></div>
<div class="r" style="left:650.89px;top:412.2px;width:13.1px;height:35.2px;background:linear-gradient(#262626,#3a3a3a);border-radius:0 0 1px 1px;box-shadow:0 0 0 0.5px #1c1c1c;"></div>
<div class="r" style="left:673.42px;top:412.2px;width:13.1px;height:35.2px;background:linear-gradient(#262626,#3a3a3a);border-radius:0 0 1px 1px;box-shadow:0 0 0 0.5px #1c1c1c;"></div>
<div class="r" style="left:696.2px;top:412.2px;width:0.8px;height:50.3px;background:#2c2c2c;"></div>
<svg class="r" style="left:686px;top:452px" width="12" height="12" viewBox="0 0 12 12"><path d="M2.5 10.8l8.3-8.3M5.5 10.8l5.3-5.3M8.3 10.8l2.5-2.5" stroke="#222" stroke-width="1"/></svg>
<svg class="r" style="left:0;top:0;will-change:transform" width="700" height="467" viewBox="0 0 700 467">
<g fill="none" stroke="#414141" stroke-width="0.9" stroke-dasharray="2.2 2.2">
<circle cx="169.5" cy="205.2" r="70.5"/><circle cx="169.5" cy="205.2" r="45"/>
<path d="M169.5 205.2L169.5 134.7"/>
<path d="M169.5 205.2L204.75 144.15"/>
<path d="M169.5 205.2L230.55 169.95"/>
<path d="M169.5 205.2L240 205.2"/>
<path d="M169.5 205.2L230.55 240.45"/>
<path d="M169.5 205.2L204.75 266.25"/>
<path d="M169.5 205.2L169.5 275.7"/>
<path d="M169.5 205.2L134.25 266.25"/>
<path d="M169.5 205.2L108.45 240.45"/>
<path d="M169.5 205.2L99 205.2"/>
<path d="M169.5 205.2L108.45 169.95"/>
<path d="M169.5 205.2L134.25 144.15"/>
</g>
<circle cx="169.5" cy="134.7" r="10.4" fill="#131313"/><circle cx="169.5" cy="134.7" r="9.45" fill="#393939"/>
<text x="169.5" y="136.8" font-size="5.9" fill="#8fb3d1" text-anchor="middle">C</text>
<circle cx="204.75" cy="144.15" r="9.9" fill="#78afb7"/>
<text x="204.75" y="146.25" font-size="5.9" fill="#1e2a2c" text-anchor="middle">G</text>
<circle cx="230.55" cy="169.95" r="10.4" fill="#131313"/><circle cx="230.55" cy="169.95" r="9.45" fill="#393939"/>
<text x="230.55" y="172.05" font-size="5.9" fill="#8fb3d1" text-anchor="middle">D</text>
<circle cx="240" cy="205.2" r="10.4" fill="#131313"/><circle cx="240" cy="205.2" r="9.45" fill="#393939"/>
<text x="240" y="207.3" font-size="5.9" fill="#8fb3d1" text-anchor="middle">A</text>
<circle cx="230.55" cy="240.45" r="10.4" fill="#131313"/><circle cx="230.55" cy="240.45" r="9.45" fill="#393939"/>
<text x="230.55" y="242.55" font-size="5.9" fill="#8fb3d1" text-anchor="middle">E</text>
<circle cx="204.75" cy="266.25" r="10.4" fill="#131313"/><circle cx="204.75" cy="266.25" r="9.45" fill="#393939"/>
<text x="204.75" y="268.35" font-size="5.9" fill="#8fb3d1" text-anchor="middle">B</text>
<circle cx="169.5" cy="275.7" r="10.4" fill="#131313"/><circle cx="169.5" cy="275.7" r="9.45" fill="#393939"/>
<text x="169.5" y="277.8" font-size="5.9" fill="#8fb3d1" text-anchor="middle">F#</text>
<circle cx="134.25" cy="266.25" r="10.4" fill="#131313"/><circle cx="134.25" cy="266.25" r="9.45" fill="#393939"/>
<text x="134.25" y="268.35" font-size="5.9" fill="#8fb3d1" text-anchor="middle">C#</text>
<circle cx="108.45" cy="240.45" r="10.4" fill="#131313"/><circle cx="108.45" cy="240.45" r="9.45" fill="#393939"/>
<text x="108.45" y="242.55" font-size="5.9" fill="#8fb3d1" text-anchor="middle">G#</text>
<circle cx="99" cy="205.2" r="10.4" fill="#131313"/><circle cx="99" cy="205.2" r="9.45" fill="#393939"/>
<text x="99" y="207.3" font-size="5.9" fill="#8fb3d1" text-anchor="middle">Eb</text>
<circle cx="108.45" cy="169.95" r="10.4" fill="#131313"/><circle cx="108.45" cy="169.95" r="9.45" fill="#393939"/>
<text x="108.45" y="172.05" font-size="5.9" fill="#8fb3d1" text-anchor="middle">Bb</text>
<circle cx="134.25" cy="144.15" r="10.4" fill="#131313"/><circle cx="134.25" cy="144.15" r="9.45" fill="#393939"/>
<text x="134.25" y="146.25" font-size="5.9" fill="#8fb3d1" text-anchor="middle">F</text>
<circle cx="169.5" cy="160.2" r="9.3" fill="#131313"/><circle cx="169.5" cy="160.2" r="8.5" fill="#393939"/>
<text x="169.5" y="162.1" font-size="5.2" fill="#8fb3d1" text-anchor="middle">Am</text>
<circle cx="192" cy="166.23" r="9.3" fill="#131313"/><circle cx="192" cy="166.23" r="8.5" fill="#393939"/>
<text x="192" y="168.13" font-size="5.2" fill="#8fb3d1" text-anchor="middle">Em</text>
<circle cx="208.47" cy="182.7" r="9.3" fill="#131313"/><circle cx="208.47" cy="182.7" r="8.5" fill="#393939"/>
<text x="208.47" y="184.6" font-size="5.2" fill="#8fb3d1" text-anchor="middle">Bm</text>
<circle cx="214.5" cy="205.2" r="9.3" fill="#131313"/><circle cx="214.5" cy="205.2" r="8.5" fill="#393939"/>
<text x="214.5" y="207.1" font-size="5.2" fill="#8fb3d1" text-anchor="middle">F#m</text>
<circle cx="208.47" cy="227.7" r="9.3" fill="#131313"/><circle cx="208.47" cy="227.7" r="8.5" fill="#393939"/>
<text x="208.47" y="229.6" font-size="5.2" fill="#8fb3d1" text-anchor="middle">C#m</text>
<circle cx="192" cy="244.17" r="9.3" fill="#131313"/><circle cx="192" cy="244.17" r="8.5" fill="#393939"/>
<text x="192" y="246.07" font-size="5.2" fill="#8fb3d1" text-anchor="middle">G#m</text>
<circle cx="169.5" cy="250.2" r="9.3" fill="#131313"/><circle cx="169.5" cy="250.2" r="8.5" fill="#393939"/>
<text x="169.5" y="252.1" font-size="5.2" fill="#8fb3d1" text-anchor="middle">Ebm</text>
<circle cx="147" cy="244.17" r="9.3" fill="#131313"/><circle cx="147" cy="244.17" r="8.5" fill="#393939"/>
<text x="147" y="246.07" font-size="5.2" fill="#8fb3d1" text-anchor="middle">Bbm</text>
<circle cx="130.53" cy="227.7" r="9.3" fill="#131313"/><circle cx="130.53" cy="227.7" r="8.5" fill="#393939"/>
<text x="130.53" y="229.6" font-size="5.2" fill="#8fb3d1" text-anchor="middle">Fm</text>
<circle cx="124.5" cy="205.2" r="9.3" fill="#131313"/><circle cx="124.5" cy="205.2" r="8.5" fill="#393939"/>
<text x="124.5" y="207.1" font-size="5.2" fill="#8fb3d1" text-anchor="middle">Cm</text>
<circle cx="130.53" cy="182.7" r="9.3" fill="#131313"/><circle cx="130.53" cy="182.7" r="8.5" fill="#393939"/>
<text x="130.53" y="184.6" font-size="5.2" fill="#8fb3d1" text-anchor="middle">Gm</text>
<circle cx="147" cy="166.23" r="9.3" fill="#131313"/><circle cx="147" cy="166.23" r="8.5" fill="#393939"/>
<text x="147" y="168.13" font-size="5.2" fill="#8fb3d1" text-anchor="middle">Dm</text>
<circle cx="169.7" cy="205.2" r="17.3" fill="#151515"/><circle cx="169.7" cy="205.2" r="16.5" fill="#78afb7"/>
<g stroke="#141414" fill="none"><path d="M167.5 194.9v15.1M172 200v16.3" stroke-width="1.25"/><path d="M167.5 202.2l4.5-1M167.5 208.7l4.5-1" stroke-width="2.5"/></g>
<path d="M166.3 302.8h1.7l2.2-1.9v6.2l-2.2-1.9h-1.7z" fill="none" stroke="#b0b0b0" stroke-width="0.8" stroke-linejoin="round"/><path d="M171.6 302.6l2.6 2.8M174.2 302.6l-2.6 2.8" stroke="#b0b0b0" stroke-width="0.7"/>
<g fill="none" stroke="#dcdcdc" stroke-width="1"><circle cx="29.4" cy="90.3" r="4"/><circle cx="29.4" cy="90.3" r="1.9"/></g>
<path d="M24.8 152h2.2a1.5 1.5 0 0 0 1.5-1.5v-2.1a1.5 1.5 0 0 1 1.5-1.5h4.5" fill="none" stroke="#8a8a8a" stroke-width="0.9"/><path d="M32.8 144.7l2.2 2.2-2.2 2.2" fill="none" stroke="#8a8a8a" stroke-width="0.9"/>
<g transform="translate(29.1 203) scale(1)" fill="none" stroke="#8a8a8a" stroke-width="0.85"><path d="M-1.2 2.6c0-1.3-1.6-1.9-1.6-3.7a2.8 2.8 0 0 1 5.6 0c0 1.8-1.6 2.4-1.6 3.7z"/><path d="M-0.9 4h1.8"/><path d="M-5.4 -1h1.5M3.9 -1h1.5M-4.6 -4.2l1.2 0.9M4.6 -4.2l-1.2 0.9M-4.6 2.2l1.2-0.9M4.6 2.2l-1.2-0.9" stroke-width="0.7"/></g>
<g fill="#8a8a8a"><rect x="25" y="310.1" width="2.5" height="1.5"/><rect x="28.2" y="310.1" width="2.5" height="1.5"/><rect x="31.4" y="310.1" width="2.5" height="1.5"/><rect x="25" y="312.3" width="2.5" height="1.5"/><rect x="28.2" y="312.3" width="2.5" height="1.5"/><rect x="31.4" y="312.3" width="2.5" height="1.5"/><rect x="25" y="314.5" width="2.5" height="1.5"/><rect x="28.2" y="314.5" width="2.5" height="1.5"/><rect x="31.4" y="314.5" width="2.5" height="1.5"/></g>
<circle cx="290.6" cy="228.1" r="2.1" fill="none" stroke="#666" stroke-width="0.8"/><path d="M292.2 229.7l1.7 1.8" stroke="#666" stroke-width="0.8"/>
<g transform="translate(679.3 50.9) rotate(-35)" fill="none" stroke="#8c8c8c" stroke-width="1"><rect x="-4.3" y="-1.7" width="5" height="3.4" rx="1.7"/><rect x="-0.7" y="-1.7" width="5" height="3.4" rx="1.7"/></g>
<g transform="translate(679.5 365.3) rotate(-35)" fill="none" stroke="#8e8e8e" stroke-width="1"><rect x="-4.3" y="-1.7" width="5" height="3.4" rx="1.7"/><rect x="-0.7" y="-1.7" width="5" height="3.4" rx="1.7"/></g>
<path d="M638.9 367.7l3.4-3.4" stroke="#ababab" stroke-width="1.6"/><path d="M639.7 362.7h4.2v4.2z" fill="#ababab"/>
<path d="M217 362v7l5.5-3.5z" fill="none" stroke="#9a9a9a" stroke-width="1" stroke-linejoin="round"/>
<circle cx="190" cy="366" r="2.8" fill="none" stroke="#8a8a8a" stroke-width="0.8"/><path d="M190 364.5v1.5l1.2-1.2M189 362.3h2" stroke="#8a8a8a" stroke-width="0.7" fill="none"/><circle cx="190" cy="366" r="4.6" fill="none" stroke="#6a6a6a" stroke-width="0.6" stroke-dasharray="0.8 1"/>
<rect x="413.6" y="349.7" width="41" height="26.6" rx="3.5" fill="none" stroke="#8fc6ce" stroke-width="1.4" stroke-dasharray="3.6 2.25"/>
<g transform="translate(433.6 362.3) scale(1.08)" fill="none" stroke="#a6dbe3" stroke-width="0.85"><path d="M-1.2 2.6c0-1.3-1.6-1.9-1.6-3.7a2.8 2.8 0 0 1 5.6 0c0 1.8-1.6 2.4-1.6 3.7z"/><path d="M-0.9 4h1.8"/><path d="M-5.4 -1h1.5M3.9 -1h1.5M-4.6 -4.2l1.2 0.9M4.6 -4.2l-1.2 0.9M-4.6 2.2l1.2-0.9M4.6 2.2l-1.2-0.9" stroke-width="0.7"/></g>
<rect x="12.5" y="395" width="9.5" height="6.4" rx="1.2" fill="#f0f0f0"/><g fill="#2a2a2a"><rect x="14" y="398.2" width="1" height="2.2"/><rect x="15.7" y="398.2" width="1" height="2.2"/><rect x="17.4" y="398.2" width="1" height="2.2"/><rect x="19.1" y="398.2" width="1" height="2.2"/></g>
<g transform="translate(44.2 398.5) rotate(45)" fill="#c8c8c8"><rect x="-0.5" y="-5.2" width="1" height="5.5"/><rect x="-1" y="-5.8" width="2" height="1.4"/><ellipse cx="0" cy="1" rx="1.5" ry="1.4"/><ellipse cx="0" cy="3" rx="2.1" ry="1.9"/></g>
<circle cx="71" cy="398.5" r="2.9" fill="none" stroke="#9c9c9c" stroke-width="0.9"/>
<circle cx="212.5" cy="398.5" r="2.9" fill="none" stroke="#9c9c9c" stroke-width="0.9"/>
<circle cx="366" cy="398.5" r="2.9" fill="none" stroke="#9c9c9c" stroke-width="0.9"/>
<circle cx="485" cy="398.5" r="2.9" fill="none" stroke="#9c9c9c" stroke-width="0.9"/>
<path d="M659.5 398.5h5M672.5 398.5h5.5M675.25 395.8v5.4" stroke="#b0b0b0" stroke-width="0.9"/>
</svg>
</div></body></html>
